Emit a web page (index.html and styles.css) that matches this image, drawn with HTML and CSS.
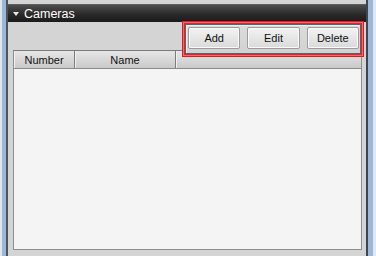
FILE: index.html
```html
<!DOCTYPE html>
<html>
<head>
<meta charset="utf-8">
<link rel="stylesheet" href="styles.css">
</head>
<body>
<div class="window">
  <div class="frame-left"></div>
  <div class="panel">
    <div class="titlebar">
      <span class="arrow"></span>
      <span class="title">Cameras</span>
    </div>
    <div class="toolbar">
      <div class="highlight">
        <div class="highlight-inner">
          <div class="btnbox">
            <button class="btn">Add</button>
            <button class="btn">Edit</button>
            <button class="btn">Delete</button>
          </div>
        </div>
      </div>
    </div>
    <div class="table">
      <div class="thead">
        <div class="th col-num">Number</div>
        <div class="th col-name">Name</div>
        <div class="th col-rest"></div>
      </div>
      <div class="tbody"></div>
    </div>
  </div>
  <div class="frame-right"></div>
</div>
</body>
</html>
```
FILE: styles.css
```css
* { box-sizing: border-box; }
html, body {
  margin: 0;
  padding: 0;
  width: 376px;
  height: 256px;
  overflow: hidden;
  font-family: "Liberation Sans", Arial, sans-serif;
  font-size: 11px;
}
.window {
  display: flex;
  width: 376px;
  height: 256px;
}
.frame-left {
  width: 8px;
  background: #9db7d6;
  border-left: 2px solid #dfe7f0;
  border-right: 2px solid #4a5560;
}
.frame-right {
  width: 10px;
  background: #9db7d6;
  border-left: 2px solid #3d464f;
  border-right: 3px solid #dfe7f0;
}
.panel {
  flex: 1;
  background: #d4d4d4;
  padding-top: 4px;
  display: flex;
  flex-direction: column;
}
.titlebar {
  height: 18px;
  background: linear-gradient(#4d4d4d, #2a2a2a 55%, #1a1a1a);
  border-top: 1px solid #5e5e5e;
  display: flex;
  align-items: center;
  padding-left: 5px;
  color: #fff;
}
.arrow {
  width: 0;
  height: 0;
  border-left: 3px solid transparent;
  border-right: 3px solid transparent;
  border-top: 4px solid #e8e8e8;
  margin-right: 5px;
  margin-top: 1px;
}
.title {
  font-size: 12.5px;
  line-height: 14px;
}
.toolbar {
  height: 28px;
  display: flex;
  justify-content: flex-end;
  padding-right: 2px;
}
.highlight {
  position: relative;
  z-index: 1;
  margin-top: -1px;
  width: 182px;
  height: 36px;
  border: 1px solid #e01a20;
  background: #f26a6e;
  padding: 1px;
}
.highlight-inner {
  height: 100%;
  border: 1px solid #e3242a;
}
.btnbox {
  height: 100%;
  border: 1px solid #56636f;
  background: linear-gradient(#dcdcdc, #d2d2d2);
  box-shadow: inset 1px 1px 0 #eeeeee;
  display: flex;
  gap: 7px;
  padding: 2px 1px 0 2px;
}
.btn {
  width: 53px;
  height: 22px;
  border: 1px solid #9c9c9c;
  border-radius: 2px;
  background: linear-gradient(#f3f3f3, #e6e6e6 50%, #dadada);
  box-shadow: inset 0 0 0 1px #fafafa;
  font-family: "Liberation Sans", Arial, sans-serif;
  font-size: 11px;
  color: #111;
  padding: 0;
}
.table {
  flex: 1;
  margin: 0 4px 6px 5px;
  border: 1px solid #8e8e8e;
  border-top-color: #7a7a7a;
  background: #f4f4f4;
  display: flex;
  flex-direction: column;
}
.thead {
  height: 18px;
  display: flex;
  background: linear-gradient(#e6e6e6, #d8d8d8 50%, #c9c9c9);
  border-bottom: 1px solid #8a8a8a;
}
.th {
  display: flex;
  align-items: center;
  justify-content: center;
  color: #111;
  border-right: 1px solid #7c7c7c;
  box-shadow: inset 1px 0 0 #f0f0f0;
}
.col-num { width: 61px; }
.col-name { width: 101px; }
.col-rest { flex: 1; border-right: none; }
.tbody { flex: 1; }
```
